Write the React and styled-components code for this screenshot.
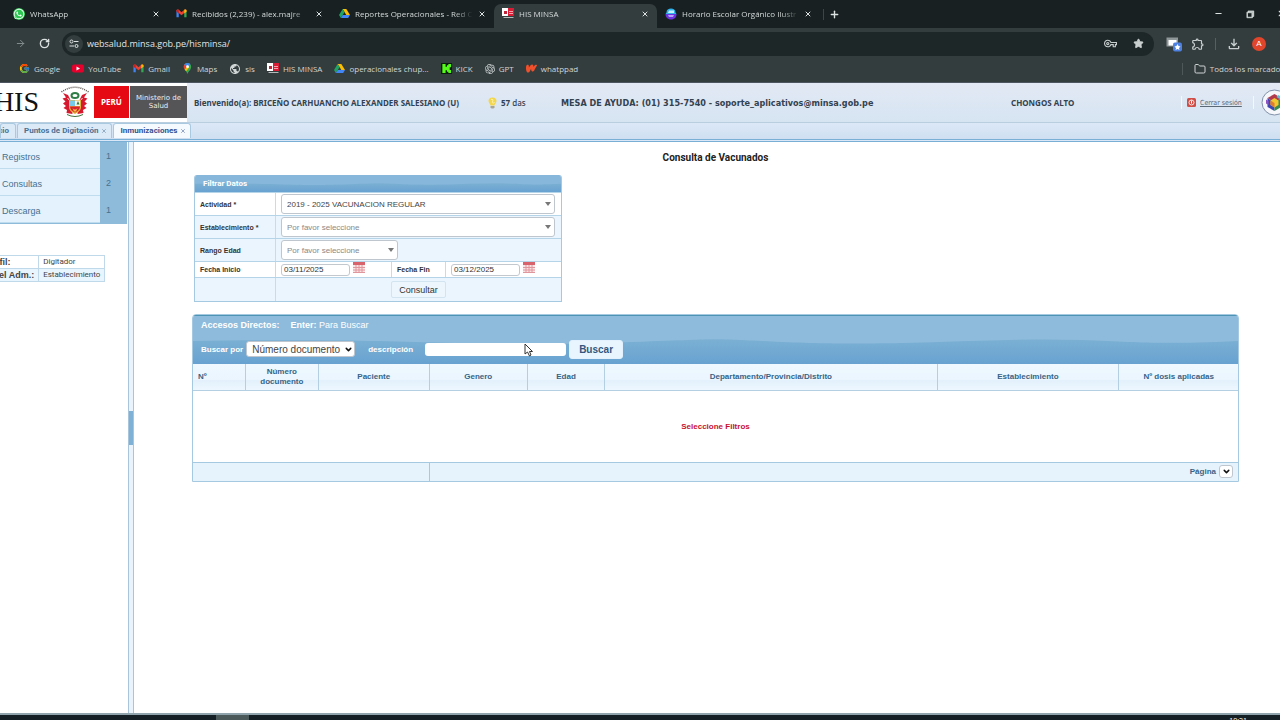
import React from "react";
import styled, { createGlobalStyle } from "styled-components";
import { ArrowRight, ChevronDown, Folder, Minus, Plus, RotateCw, Star, X } from "lucide-react";
import { FcGoogle } from "react-icons/fc";
import { FaWhatsapp } from "react-icons/fa";
import { MdOutlineExtension, MdOutlineFileDownload, MdOutlineVpnKey, MdPublic } from "react-icons/md";
import { SiOpenai, SiWattpad } from "react-icons/si";
import { VscChromeRestore } from "react-icons/vsc";

const GmailIcon = () => (
  <svg width="11" height="11" viewBox="0 0 24 24" aria-hidden="true">
    <path d="M1 5v15h5V10z" fill="#4285f4" />
    <path d="M23 5v15h-5V10z" fill="#34a853" />
    <path d="M1 6c0-3 3-3 5-2l6 5 6-5c2-1 5-1 5 2l-5 5-6 5-6-5z" fill="#ea4335" />
    <path d="M18 4c2-1 5-1 5 2v2l-5 4z" fill="#fbbc04" />
    <path d="M6 4C4 3 1 3 1 6v2l5 4z" fill="#c5221f" />
  </svg>
);

const DriveIcon = () => (
  <svg width="11" height="11" viewBox="0 0 24 24" aria-hidden="true">
    <path d="M8 2h8l8 13h-8z" fill="#fbbc04" />
    <path d="M8 2l4 7-8 13-4-7z" fill="#1ea362" />
    <path d="M8 15h16l-4 7H4z" fill="#4285f4" />
  </svg>
);

const YoutubeIcon = () => (
  <svg width="12" height="11" viewBox="0 0 24 22" aria-hidden="true">
    <rect x="0" y="3" width="24" height="16" rx="4" fill="#e8002d" />
    <path d="M9 7v8l7-4z" fill="#fff" />
  </svg>
);

const MapsIcon = () => (
  <svg width="11" height="11" viewBox="0 0 24 24" aria-hidden="true">
    <path d="M12 0c5 0 8 4 8 8 0 7-6 9-8 16C10 17 4 15 4 8c0-4 3-8 8-8z" fill="#34a853" />
    <path d="M12 0C8 0 5 2 4 6l5 5 9-9c-2-1-4-2-6-2z" fill="#4285f4" />
    <path d="M4 6c-1 3 1 7 2 8l6-6-6-5z" fill="#ea4335" />
    <path d="M6 14l7-8 3 3-7 9z" fill="#fbbc04" />
    <circle cx="12" cy="8" r="3" fill="#fff" />
  </svg>
);

const HisIcon = () => (
  <svg width="12" height="11" viewBox="0 0 24 22" aria-hidden="true">
    <rect width="12" height="16" fill="#fff" />
    <rect x="12" width="12" height="16" fill="#d91c35" />
    <path d="M4 6h6v6H4z" fill="#c42439" />
    <path d="M14 6h8v2h-8zM14 10h8v2h-8z" fill="#f3a5ad" />
    <path d="M3 18h20v2H3z" fill="#b5babb" />
  </svg>
);

const KickIcon = () => (
  <svg width="11" height="11" viewBox="0 0 24 24" aria-hidden="true">
    <rect width="24" height="24" fill="#0c1f0b" />
    <path d="M3 2h7v6h3V5h3V2h6v7h-3v6h3v7h-6v-3h-3v-3h-3v6H3z" fill="#53fc18" />
  </svg>
);

const CanvaIcon = () => (
  <svg width="12" height="12" viewBox="0 0 24 24" aria-hidden="true">
    <path d="M3 9C3 3 7 1 12 1s9 2 9 8l2 3H1z" fill="#2fb4ee" />
    <path d="M1 12h22c0 6-4 11-11 11S1 18 1 12z" fill="#6a35e0" />
    <path d="M8 5h10v5H6z" fill="#c9f3fb" />
    <path d="M6 14h12l-2 4H8z" fill="#b8a2f5" />
  </svg>
);

const TuneIcon = () => (
  <svg width="10" height="10" viewBox="0 0 20 20" fill="none" stroke="#dce1e1" strokeWidth="2" aria-hidden="true">
    <circle cx="5" cy="5" r="3" />
    <path d="M10 5h9" />
    <circle cx="15" cy="14" r="3" />
    <path d="M1 14h9" />
  </svg>
);

const ExtensionIcon = () => (
  <svg width="16" height="16" viewBox="0 0 32 32" aria-hidden="true">
    <path d="M1 3h23v18H1z" fill="#8f9798" />
    <path d="M5 8h16v11H5z" fill="#fff" />
    <rect x="14" y="13" width="18" height="18" rx="4" fill="#4d80e0" />
    <path d="M23 16l2 4 4 1-3 3 1 4-4-2-4 2 1-4-3-3 4-1z" fill="#fff" />
  </svg>
);

const CoatOfArms = () => (
  <svg width="30" height="31" viewBox="0 0 60 62" role="img" aria-label="Escudo del Perú">
    <path d="M3 12Q30-7 57 12" fill="none" stroke="#5d5551" strokeWidth="3" strokeDasharray="2 2" />
    <path d="M6 14l10 4 6 12 3 26-12-2 1-6-7-4 5-4-6-5 5-4-6-6 7-2z" fill="#d7192f" />
    <path d="M54 14l-10 4-6 12-3 26 12-2-1-6 7-4-5-4 6-5-5-4 6-6-7-2z" fill="#d7192f" />
    <path d="M15 24l5 6M45 24l-5 6" fill="none" stroke="#f8efdf" strokeWidth="2" />
    <ellipse cx="30" cy="19" rx="7" ry="5" fill="#fff" stroke="#2f7d46" strokeWidth="4" />
    <path d="M18 28h24v14c0 8-7 11-12 14-5-3-12-6-12-14z" fill="#e4b33a" />
    <path d="M20 29h10v11H20z" fill="#78c9e6" />
    <path d="M30 29h10v11H30z" fill="#f6f4e8" />
    <path d="M33 37l3-7 3 7z" fill="#2f7d46" />
    <path d="M20 41h20c0 6-5 10-10 12-5-2-10-6-10-12z" fill="#d8202d" />
    <path d="M25 44q5 6 10 0l-3 7h-4z" fill="#f3c642" />
    <path d="M14 57q16 8 32 0" fill="none" stroke="#42713b" strokeWidth="2" />
  </svg>
);

const BulbIcon = () => (
  <svg width="9" height="12" viewBox="0 0 18 24" aria-hidden="true">
    <path d="M9 1c5 0 8 3 8 7s-4 6-4 9H5c0-3-4-5-4-9s3-7 8-7z" fill="#f2d64b" />
    <path d="M6 5c3-2 5 1 3 4s2 4 4 2" fill="none" stroke="#fff6b8" strokeWidth="2" />
    <path d="M5 18h8v3l-2 2H7l-2-2z" fill="#a9a591" />
  </svg>
);

const PowerIcon = () => (
  <svg width="9" height="9" viewBox="0 0 18 18" aria-hidden="true">
    <rect width="18" height="18" rx="3" fill="#cf4f48" />
    <circle cx="9" cy="9" r="5" fill="none" stroke="#fbe6e4" strokeWidth="2" />
    <path d="M9 5v6" stroke="#fff" strokeWidth="2" />
  </svg>
);

const CubeIcon = () => (
  <svg width="27" height="27" viewBox="0 0 54 54" role="img" aria-label="Aplicativos">
    <circle cx="27" cy="27" r="25" fill="#f5f7fb" stroke="#8191a9" strokeWidth="2" />
    <path d="M27 10l14 8-14 9-14-9z" fill="#b33a4b" />
    <path d="M13 18l14 9v17l-14-8z" fill="#3e46b5" />
    <path d="M41 18l-14 9v17l14-8z" fill="#3b8c4c" />
    <path d="M27 18l8 5v9l-8 5-8-5v-9z" fill="#f1c62f" />
    <path d="M19 23l8 5v9l-8-5z" fill="#e07b33" />
    <path d="M10 21l5 3v8l-5-3z" fill="#8f53c4" />
    <path d="M35 12l6 4-4 4-6-4z" fill="#5fc1d4" />
  </svg>
);

const CalendarIcon = () => (
  <svg width="12" height="11" viewBox="0 0 24 22" aria-hidden="true">
    <rect width="24" height="22" fill="#fbe3e4" />
    <rect width="24" height="6" fill="#d9636c" />
    <path d="M0 11h24M0 16h24M0 21h24M6 6v16M12 6v16M18 6v16" stroke="#df969d" strokeWidth="2" />
  </svg>
);

const Wave = () => (
  <WaveSvg viewBox="0 0 1046 50" preserveAspectRatio="none" aria-hidden="true">
    <defs>
      <linearGradient id="wave" x2="0" y2="1">
        <stop offset="0" stopColor="#7bb0d3" />
        <stop offset="1" stopColor="#68a2d1" />
      </linearGradient>
    </defs>
    <path
      d="M0 26C130 24 190 26 260 28S350 30 440 27S510 23 570 26S650 29 710 28S830 23 890 25S960 30 1046 26V50H0z"
      fill="url(#wave)"
    />
  </WaveSvg>
);

const browserTabs = [
  { title: "WhatsApp", icon: <FaWhatsapp size={12} color="#eafff0" style={{ background: "#2dc653", borderRadius: 6 }} /> },
  { title: "Recibidos (2,239) - alex.majre", icon: <GmailIcon /> },
  { title: "Reportes Operacionales - Red C", icon: <DriveIcon /> },
  { title: "HIS MINSA", icon: <HisIcon />, active: true },
  { title: "Horario Escolar Orgánico Ilustr", icon: <CanvaIcon /> },
];

const bookmarks = [
  { name: "Google", icon: <FcGoogle size={11} /> },
  { name: "YouTube", icon: <YoutubeIcon /> },
  { name: "Gmail", icon: <GmailIcon /> },
  { name: "Maps", icon: <MapsIcon /> },
  { name: "sis", icon: <MdPublic size={12} /> },
  { name: "HIS MINSA", icon: <HisIcon /> },
  { name: "operacionales chup...", icon: <DriveIcon /> },
  { name: "KICK", icon: <KickIcon /> },
  { name: "GPT", icon: <SiOpenai size={10} /> },
  { name: "whatppad", icon: <SiWattpad size={11} color="#f0502b" /> },
];

const menu = [
  { name: "Registros", count: 1 },
  { name: "Consultas", count: 2 },
  { name: "Descarga", count: 1 },
];

const columns = [
  { name: "Nº", width: "5%", align: "left" },
  { name: "Número documento", width: "7%" },
  { name: "Paciente", width: "10.6%" },
  { name: "Genero", width: "9.4%" },
  { name: "Edad", width: "7.4%" },
  { name: "Departamento/Provincia/Distrito", width: "31.8%" },
  { name: "Establecimiento", width: "17.4%" },
  { name: "Nº dosis aplicadas", width: "11.4%" },
];

const DropDown = ({ id, value, kind, muted }) => (
  <SelectWrap $kind={kind}>
    <Select id={id} $kind={kind} $muted={muted} defaultValue={value}>
      <option value={value}>{value}</option>
    </Select>
    {kind === "wide" || kind === "short" ? (
      <svg width="6" height="4" viewBox="0 0 6 4" aria-hidden="true">
        <path d="M0 0h6L3 4z" fill="#777" />
      </svg>
    ) : (
      <ChevronDown size={9} strokeWidth={4} color="#111" />
    )}
  </SelectWrap>
);

const App = () => (
  <>
    <GlobalStyle />
    <Screen>
      <TabStrip>
        {browserTabs.map((tab) => (
          <BrowserTab key={tab.title} $active={tab.active}>
            {tab.icon}
            <TabTitle>{tab.title}</TabTitle>
            <IconButton aria-label="Cerrar pestaña">
              <X size={8} strokeWidth={3} />
            </IconButton>
          </BrowserTab>
        ))}
        <NewTab aria-label="Nueva pestaña">
          <Plus size={11} strokeWidth={3} />
        </NewTab>
        <WindowControls>
          <IconButton aria-label="Minimizar">
            <Minus size={9} strokeWidth={3} />
          </IconButton>
          <IconButton aria-label="Restaurar">
            <VscChromeRestore size={10} strokeWidth={1} />
          </IconButton>
          <IconButton aria-label="Cerrar">
            <X size={9} strokeWidth={3} />
          </IconButton>
        </WindowControls>
      </TabStrip>

      <Toolbar>
        <IconButton aria-label="Adelante" $dim>
          <ArrowRight size={11} />
        </IconButton>
        <IconButton aria-label="Recargar">
          <RotateCw size={11} strokeWidth={3} />
        </IconButton>
        <Omnibox>
          <SiteInfo>
            <TuneIcon />
          </SiteInfo>
          <UrlInput aria-label="Dirección" defaultValue="websalud.minsa.gob.pe/hisminsa/" />
          <MdOutlineVpnKey size={13} />
          <Star size={11} fill="currentColor" />
        </Omnibox>
        <Extensions>
          <ExtensionIcon />
          <MdOutlineExtension size={14} />
          <Divider />
          <MdOutlineFileDownload size={16} />
          <Avatar>A</Avatar>
        </Extensions>
      </Toolbar>

      <Bookmarks>
        {bookmarks.map((item) => (
          <Bookmark key={item.name} href="#">
            {item.icon}
            {item.name}
          </Bookmark>
        ))}
        <AllBookmarks>
          <Bookmark href="#">
            <Folder size={12} />
            Todos los marcadores
          </Bookmark>
        </AllBookmarks>
      </Bookmarks>

      <SiteHeader>
        <Brand>
          <BrandName>HIS</BrandName>
          <CoatOfArms />
          <Badges>
            <Peru>PERÚ</Peru>
            <Ministry>Ministerio de Salud</Ministry>
          </Badges>
        </Brand>
        <HeaderText>Bienvenido(a): BRICEÑO CARHUANCHO ALEXANDER SALESIANO (U)</HeaderText>
        <Days>
          <BulbIcon />
          <HeaderText as="span">
            57 <small>das</small>
          </HeaderText>
        </Days>
        <HelpDesk>MESA DE AYUDA: (01) 315-7540 - soporte_aplicativos@minsa.gob.pe</HelpDesk>
        <HeaderText>CHONGOS ALTO</HeaderText>
        <Session>
          <LogoutLink href="#">
            <PowerIcon />
            <span>Cerrar sesión</span>
          </LogoutLink>
          <CubeIcon />
        </Session>
      </SiteHeader>

      <SiteTabs>
        <FirstTab>Inicio</FirstTab>
        <SiteTab>
          Puntos de Digitación <X size={6} strokeWidth={2} />
        </SiteTab>
        <SiteTab $active>
          Inmunizaciones <X size={6} strokeWidth={2} />
        </SiteTab>
      </SiteTabs>

      <Body>
        <Sidebar>
          <Menu>
            {menu.map((item) => (
              <MenuItem key={item.name} href="#">
                <span>{item.name}</span>
                <Count>{item.count}</Count>
              </MenuItem>
            ))}
          </Menu>
          <ProfileTable>
            <tbody>
              <tr>
                <th scope="row">Perfil:</th>
                <td>Digitador</td>
              </tr>
              <tr>
                <th scope="row">Nivel Adm.:</th>
                <td>Establecimiento</td>
              </tr>
            </tbody>
          </ProfileTable>
        </Sidebar>
        <Splitter>
          <Handle />
        </Splitter>

        <Main>
          <Title>Consulta de Vacunados</Title>

          <Filters onSubmit={(e) => e.preventDefault()}>
            <FilterHeader>
              <Wave />
              <span>Filtrar Datos</span>
            </FilterHeader>
            <FilterRow>
              <FilterLabel htmlFor="actividad">Actividad *</FilterLabel>
              <Cell>
                <DropDown id="actividad" kind="wide" value="2019 - 2025 VACUNACION REGULAR" />
              </Cell>
            </FilterRow>
            <FilterRow $tinted>
              <FilterLabel htmlFor="establecimiento">Establecimiento *</FilterLabel>
              <Cell>
                <DropDown id="establecimiento" kind="wide" value="Por favor seleccione" muted />
              </Cell>
            </FilterRow>
            <FilterRow $tinted>
              <FilterLabel htmlFor="rango">Rango Edad</FilterLabel>
              <Cell>
                <DropDown id="rango" kind="short" value="Por favor seleccione" muted />
              </Cell>
            </FilterRow>
            <DateRow>
              <FilterLabel htmlFor="inicio">Fecha Inicio</FilterLabel>
              <Cell>
                <DateInput id="inicio" defaultValue="03/11/2025" />
                <DateButton type="button" aria-label="Elegir fecha de inicio">
                  <CalendarIcon />
                </DateButton>
              </Cell>
              <FilterLabel htmlFor="fin">Fecha Fin</FilterLabel>
              <Cell>
                <DateInput id="fin" defaultValue="03/12/2025" />
                <DateButton type="button" aria-label="Elegir fecha de fin">
                  <CalendarIcon />
                </DateButton>
              </Cell>
            </DateRow>
            <FilterRow $tinted>
              <span />
              <SubmitCell>
                <SubmitButton>Consultar</SubmitButton>
              </SubmitCell>
            </FilterRow>
          </Filters>

          <Results>
            <SearchHeader>
              <Wave />
              <Shortcuts>
                <b>Accesos Directos:</b>
                <span>
                  <b>Enter:</b> Para Buscar
                </span>
              </Shortcuts>
              <SearchBar>
                <SearchLabel htmlFor="campo">Buscar por</SearchLabel>
                <DropDown id="campo" kind="field" value="Número documento" />
                <SearchLabel htmlFor="descripcion" $spaced>
                  descripción
                </SearchLabel>
                <SearchField>
                  <input id="descripcion" />
                  <Pointer width="9" height="14" viewBox="0 0 18 28" aria-hidden="true">
                    <path d="M2 2v20l5-4 4 8 3-2-3-7h6z" fill="#fff" stroke="#333" strokeWidth="2" />
                  </Pointer>
                </SearchField>
                <SearchButton>Buscar</SearchButton>
              </SearchBar>
            </SearchHeader>
            <DataTable>
              <colgroup>
                {columns.map((col) => (
                  <Col key={col.name} $width={col.width} />
                ))}
              </colgroup>
              <thead>
                <tr>
                  {columns.map((col) => (
                    <HeadCell key={col.name} scope="col" $align={col.align}>
                      {col.name}
                    </HeadCell>
                  ))}
                </tr>
              </thead>
              <tbody>
                <tr>
                  <EmptyCell colSpan={8}>Seleccione Filtros</EmptyCell>
                </tr>
              </tbody>
              <tfoot>
                <tr>
                  <FootCell colSpan={3} />
                  <FootCell colSpan={5}>
                    <Pager>
                      <label htmlFor="pagina">Página</label>
                      <DropDown id="pagina" kind="page" value="" />
                    </Pager>
                  </FootCell>
                </tr>
              </tfoot>
            </DataTable>
          </Results>
        </Main>
      </Body>

      <Taskbar>
        <TaskbarApp />
        <Clock>10:21</Clock>
      </Taskbar>
    </Screen>
  </>
);

export default App;

const GlobalStyle = createGlobalStyle`
  * {
    box-sizing: border-box;
  }
  body {
    margin: 0;
    overflow: hidden;
    font-family: "Liberation Sans", Arial, sans-serif;
    font-size: 9px;
    background: #fff;
  }
  button, input, select {
    font-family: inherit;
    margin: 0;
  }
  svg {
    flex: none;
  }
`;

const Screen = styled.div`
  display: flex;
  flex-direction: column;
  height: 100vh;
  overflow: hidden;
`;

/* ---- browser ---- */

const IconButton = styled.button`
  display: flex;
  padding: 0;
  border: 0;
  background: none;
  color: ${(p) => (p.$dim ? "#8a9394" : "#dce1e1")};
`;

const TabStrip = styled.div`
  display: flex;
  align-items: center;
  height: 28px;
  padding-left: 5px;
  background: #182021;
  color: #d5dada;
  font: 8px "Open Sans", "Noto Sans", sans-serif;
`;

const BrowserTab = styled.div`
  display: flex;
  align-items: center;
  align-self: flex-end;
  gap: 5px;
  width: 163px;
  height: 24px;
  padding: 0 8px 5px;
  border-radius: 7px 7px 0 0;
  background: ${(p) => (p.$active ? "#343d3e" : "none")};
`;

const TabTitle = styled.span`
  flex: 1;
  white-space: nowrap;
  mask-image: linear-gradient(90deg, #000 84%, transparent 100%);
`;

const NewTab = styled(IconButton)`
  margin-left: 3px;
  padding-left: 5px;
  border-left: 1px solid #3c4647;
`;

const WindowControls = styled.div`
  display: flex;
  gap: 22px;
  margin-left: auto;
  margin-right: -6px;
`;

const Toolbar = styled.div`
  display: flex;
  align-items: center;
  gap: 13px;
  height: 31px;
  padding: 0 14px 0 15px;
  background: #343d3e;
  color: #c9cfcf;
`;

const Omnibox = styled.div`
  display: flex;
  align-items: center;
  flex: 1;
  gap: 16px;
  height: 24px;
  padding: 0 10px 0 3px;
  margin: 0 -1px;
  border-radius: 12px;
  background: #1e2728;
`;

const SiteInfo = styled.span`
  display: flex;
  align-items: center;
  justify-content: center;
  width: 18px;
  height: 18px;
  margin-right: -12px;
  border-radius: 9px;
  background: #343d3e;
`;

const UrlInput = styled.input`
  flex: 1;
  padding: 0;
  border: 0;
  background: none;
  color: #e1e5e5;
  font: 9px "Open Sans", "Noto Sans", sans-serif;
`;

const Extensions = styled.div`
  display: flex;
  align-items: center;
  gap: 9px;
`;

const Divider = styled.span`
  width: 1px;
  height: 12px;
  margin: 0 1px;
  background: #566061;
`;

const Avatar = styled.span`
  width: 14px;
  height: 14px;
  margin-left: 1px;
  border-radius: 7px;
  background: #e1452c;
  color: #fff;
  font-size: 8px;
  line-height: 14px;
  text-align: center;
`;

const Bookmarks = styled.nav`
  display: flex;
  align-items: center;
  gap: 12px;
  height: 24px;
  padding: 0 0 4px 19px;
  border-bottom: 1px solid #4c5560;
  background: #343d3e;
`;

const Bookmark = styled.a`
  display: flex;
  align-items: center;
  gap: 4px;
  color: #d0d5d5;
  font: 8px "Open Sans", "Noto Sans", sans-serif;
  text-decoration: none;
  white-space: nowrap;
`;

const AllBookmarks = styled.div`
  margin: 0 -12px 0 auto;
  padding-left: 11px;
  border-left: 1px solid #4e5859;
`;

/* ---- site header ---- */

const SiteHeader = styled.header`
  display: grid;
  grid-template-columns: 194px 294fr 73fr 450fr 170fr 99px;
  align-items: center;
  height: 39px;
  background: linear-gradient(#e3e9f5, #d6e4f2);
  color: #34424f;
`;

const Brand = styled.div`
  display: flex;
  align-items: center;
  justify-content: flex-end;
  align-self: stretch;
  gap: 4px;
  width: 187px;
  padding-bottom: 2px;
  overflow: hidden;
  background: #fff;
`;

const BrandName = styled.strong`
  margin-right: 17px;
  color: #111;
  font: 28px "Liberation Serif", serif;
`;

const Badges = styled.div`
  display: flex;
  gap: 1px;
  height: 32px;
`;

const Peru = styled.div`
  width: 35px;
  background: #e50914;
  color: #fff;
  font: bold 8px/32px "Open Sans", sans-serif;
  text-align: center;
`;

const Ministry = styled.div`
  width: 57px;
  padding-top: 8px;
  background: #555456;
  color: #eee;
  font: 7px/8px "DejaVu Sans", sans-serif;
  text-align: center;
`;

const HeaderText = styled.div`
  font: bold 8px "Noto Sans", sans-serif;
  white-space: nowrap;

  small {
    font-size: 8px;
    font-weight: 500;
  }
`;

const Days = styled.div`
  display: flex;
  align-items: center;
  gap: 4px;
`;

const HelpDesk = styled(HeaderText)`
  font: bold 9px "DejaVu Sans Condensed", "DejaVu Sans", sans-serif;
`;

const Session = styled.div`
  display: flex;
  align-items: center;
  justify-content: space-between;
  margin-right: -8px;
`;

const LogoutLink = styled.a`
  display: flex;
  align-items: center;
  gap: 4px;
  height: 13px;
  padding: 0 11px 0 5px;
  border: solid #f4f8fc;
  border-width: 0 1px;
  color: #5b6875;
  font: 7px "DejaVu Sans Condensed", "DejaVu Sans", sans-serif;
  white-space: nowrap;
`;

const SiteTabs = styled.nav`
  display: flex;
  height: 20px;
  border-top: 1px solid #b9cfdf;
  border-bottom: 3px double #79afd4;
  background: linear-gradient(#dce8f6, #cfdff1);
`;

const SiteTab = styled.div`
  display: flex;
  align-items: center;
  gap: 3px;
  height: 15px;
  padding: 0 4px 1px 6px;
  margin-right: 1px;
  border: 1px solid #a9c9e0;
  border-bottom: 0;
  border-radius: 3px 3px 0 0;
  background: ${(p) => (p.$active ? "#f5faff" : "#dceaf8")};
  color: ${(p) => (p.$active ? "#35508f" : "#4b7191")};
  font: bold 8px Roboto, sans-serif;
`;

const FirstTab = styled(SiteTab)`
  justify-content: flex-end;
  width: 16px;
  padding: 0 6px 1px 0;
  overflow: hidden;
`;

/* ---- body ---- */

const Body = styled.div`
  display: flex;
  flex: 1;
  min-height: 0;
`;

const Sidebar = styled.aside`
  width: 128px;
  overflow: hidden;
`;

const Menu = styled.nav`
  margin-right: 1px;
  border-bottom: 1px solid #8fbbda;
`;

const MenuItem = styled.a`
  display: flex;
  justify-content: space-between;
  height: 27px;
  padding-left: 2px;
  border-bottom: 1px solid #bfdcef;
  background: #e4f2fd;
  color: #47708f;
  line-height: 30px;
  text-decoration: none;
`;

const Count = styled.span`
  width: 27px;
  height: 27px;
  padding-left: 6px;
  background: #8fbbda;
  line-height: 28px;
`;

const ProfileTable = styled.table`
  margin: 31px 0 0 -20px;
  border-collapse: collapse;
  color: #444;

  th,
  td {
    height: 13px;
    padding: 0 4px;
    border: 1px solid #bfd8ea;
    text-align: left;
    line-height: 12px;
  }
  td {
    font-family: Roboto, sans-serif;
    font-size: 8px;
  }
  tr:last-child {
    background: #e9f5fe;
  }
`;

const Splitter = styled.div`
  display: flex;
  align-items: center;
  width: 6px;
  border: solid #a9c5dc;
  border-width: 0 1px;
  background: #eaf3fc;
`;

const Handle = styled.span`
  width: 4px;
  height: 34px;
  background: #7fb1d6;
`;

const Main = styled.main`
  flex: 1;
  min-width: 0;
  padding: 0 41px 0 58px;
`;

const Title = styled.h1`
  margin: 10px 0 12px;
  color: #222;
  font: bold 10px/11px Roboto, sans-serif;
  text-align: center;
`;

const WaveSvg = styled.svg`
  position: absolute;
  inset: 0;
  width: 100%;
  height: 100%;
`;

const Filters = styled.form`
  width: 368px;
  margin: 0 0 12px 2px;
  border: 1px solid #a6c9e2;
  border-top: 0;
  border-radius: 3px 3px 0 0;
  overflow: hidden;
`;

const FilterHeader = styled.div`
  position: relative;
  height: 17px;
  padding-left: 8px;
  background: #87b7da;
  color: #fff;
  font: bold 8px/17px Roboto, sans-serif;

  span {
    position: relative;
  }
`;

const FilterRow = styled.div`
  display: grid;
  grid-template-columns: 80px 1fr;
  align-items: center;
  min-height: 23px;
  border-top: 1px solid #b5d4e8;
  background: ${(p) => (p.$tinted ? "#eaf5fe" : "#fff")};
`;

const DateRow = styled(FilterRow)`
  grid-template-columns: 80px 116px 54px 1fr;
  min-height: 16px;
`;

const FilterLabel = styled.label`
  padding-left: 5px;
  color: #333;
  font-size: 7px;
  font-weight: bold;
`;

const Cell = styled.div`
  display: flex;
  align-items: center;
  gap: 3px;
  align-self: stretch;
  padding: 0 6px 0 5px;
  border-left: 1px solid #c5dcea;

  & + ${FilterLabel} {
    align-self: stretch;
    border-left: 1px solid #c5dcea;
    line-height: 15px;
  }
`;

const SubmitCell = styled(Cell)`
  justify-content: center;
  padding: 3px 6px;
`;

const selectWidth = { wide: "100%", short: "117px", field: "109px", page: "14px" };

const SelectWrap = styled.span`
  position: relative;
  display: flex;
  width: ${(p) => selectWidth[p.$kind]};

  svg {
    position: absolute;
    right: ${(p) => (p.$kind === "wide" || p.$kind === "short" ? "4px" : "2px")};
    top: 0;
    bottom: 0;
    margin: auto;
    pointer-events: none;
  }
`;

const Select = styled.select`
  appearance: none;
  width: 100%;
  height: ${(p) => ({ field: "16px", page: "13px" })[p.$kind] || "20px"};
  padding: 0 5px;
  border: 1px solid #bfc6cd;
  border-radius: 3px;
  background: #fff;
  color: ${(p) => (p.$muted ? "#888" : "#444")};
  font-size: ${(p) => (p.$kind === "field" ? "10px" : "8px")};
`;

const DateInput = styled.input`
  width: 69px;
  height: 12px;
  padding: 0 2px;
  border: 1px solid #c2c8cd;
  border-radius: 3px;
  color: #333;
  font-size: 8px;
`;

const DateButton = styled(IconButton)`
  align-self: flex-start;
`;

const SubmitButton = styled.button`
  height: 17px;
  padding: 0 7px;
  border: 1px solid #d3e4f1;
  border-radius: 2px;
  background: #edf6fd;
  color: #333;
  font-size: 9px;
`;

const Results = styled.section`
  border: 1px solid #a6c9e2;
  border-radius: 4px 4px 0 0;
  overflow: hidden;
`;

const SearchHeader = styled.div`
  position: relative;
  height: 49px;
  padding: 3px 8px 0;
  border-top: 1px solid #4c93b4;
  background: #8ebbdb;
  color: #fff;
`;

const Shortcuts = styled.div`
  position: relative;
  display: flex;
  gap: 11px;
  line-height: 12px;
`;

const SearchBar = styled.div`
  position: relative;
  display: flex;
  align-items: center;
  gap: 3px;
  height: 20px;
  margin-top: 8px;
`;

const SearchLabel = styled.label`
  margin: ${(p) => (p.$spaced ? "0 9px 0 10px" : "0")};
  font-size: 8px;
  font-weight: bold;
`;

const SearchField = styled.span`
  position: relative;
  display: flex;

  input {
    width: 141px;
    height: 13px;
    padding: 0 4px;
    border: 0;
    border-radius: 3px;
    font-size: 9px;
  }
`;

/* mouse pointer resting over the text box */
const Pointer = styled.svg`
  position: absolute;
  left: 99px;
  top: 0;
`;

const SearchButton = styled.button`
  height: 19px;
  padding: 0 9px;
  border: 1px solid #e2f1fd;
  border-radius: 3px;
  background: #e8f4fe;
  color: #33587e;
  font-size: 10px;
  font-weight: bold;
`;

const DataTable = styled.table`
  width: 100%;
  table-layout: fixed;
  border-collapse: collapse;
  color: #366487;
  font-size: 8px;
`;

const Col = styled.col`
  width: ${(p) => p.$width};
`;

const HeadCell = styled.th`
  height: 26px;
  padding: 0 5px;
  border: solid #b4cfe2;
  border-width: 0 0 1px 1px;
  background: linear-gradient(#eff8ff, #eaf5fe 60%, #e2f0fb 60%, #edf7ff);
  line-height: 10px;
  text-align: ${(p) => p.$align || "center"};

  &:first-child {
    border-left: 0;
  }
`;

const EmptyCell = styled.td`
  height: 72px;
  color: #c8102e;
  font-weight: bold;
  text-align: center;
`;

const FootCell = styled.td`
  height: 19px;
  padding: 0 5px;
  border-top: 1px solid #a6c9e2;
  background: #e6f3fd;

  & + & {
    border-left: 1px solid #a6c9e2;
  }
`;

const Pager = styled.div`
  display: flex;
  align-items: center;
  justify-content: flex-end;
  gap: 3px;
  font-weight: bold;
`;

const Taskbar = styled.footer`
  display: flex;
  justify-content: space-between;
  height: 7px;
  padding: 0 33px 0 216px;
  overflow: hidden;
  border-top: 2px solid #8fa4ad;
  background: #141f25;
`;

const TaskbarApp = styled.span`
  width: 33px;
  background: #4c595b;
`;

const Clock = styled.span`
  padding-top: 2px;
  color: #fff;
  font: 7px/8px "Open Sans", sans-serif;
`;
